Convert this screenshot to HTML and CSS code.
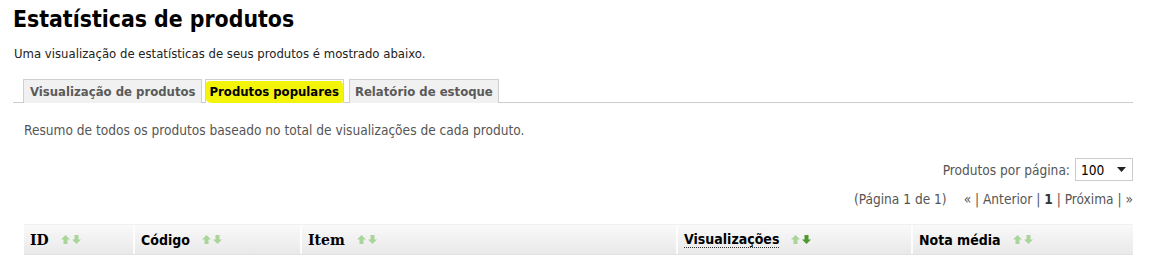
FILE: index.html
```html
<!DOCTYPE html>
<html lang="pt">
<head>
<meta charset="utf-8">
<title>Estatísticas de produtos</title>
<link rel="stylesheet" href="styles.css">
</head>
<body>
<div class="page">
  <h1 class="title">Estatísticas de produtos</h1>
  <p class="intro">Uma visualização de estatísticas de seus produtos é mostrado abaixo.</p>
  <ul class="tabs">
    <li class="tab tab-first">Visualização de produtos</li>
    <li class="tab tab-active"><span class="marker"></span><span class="tab-label">Produtos populares</span></li>
    <li class="tab tab-last">Relatório de estoque</li>
  </ul>
  <div class="panel">
    <p class="summary">Resumo de todos os produtos baseado no total de visualizações de cada produto.</p>
    <div class="perpage">
      <span class="perpage-label">Produtos por página:</span>
      <span class="select"><span class="select-value">100</span><svg class="select-caret" width="9" height="5" viewBox="0 0 9 5"><path d="M0 0H9L4.5 5Z" fill="#222"/></svg></span>
    </div>
    <div class="pager">
      <span class="pager-info">(Página 1 de 1)</span>
      <span class="pager-links">« | Anterior | <b class="pager-current">1</b> | Próxima | »</span>
    </div>
    <div class="thead">
      <div class="th col-id"><span class="th-label serif">ID</span><span class="sort"><svg width="9" height="9" viewBox="0 0 9 9"><path d="M4.5 0L9 4.5H6.5V9H2.5V4.5H0Z" fill="#a9d59a"/></svg><svg width="9" height="9" viewBox="0 0 9 9"><path d="M4.5 9L9 4.5H6.5V0H2.5V4.5H0Z" fill="#a9d59a"/></svg></span></div>
      <div class="th col-code"><span class="th-label">Código</span><span class="sort"><svg width="9" height="9" viewBox="0 0 9 9"><path d="M4.5 0L9 4.5H6.5V9H2.5V4.5H0Z" fill="#a9d59a"/></svg><svg width="9" height="9" viewBox="0 0 9 9"><path d="M4.5 9L9 4.5H6.5V0H2.5V4.5H0Z" fill="#a9d59a"/></svg></span></div>
      <div class="th col-item"><span class="th-label serif">Item</span><span class="sort"><svg width="9" height="9" viewBox="0 0 9 9"><path d="M4.5 0L9 4.5H6.5V9H2.5V4.5H0Z" fill="#a9d59a"/></svg><svg width="9" height="9" viewBox="0 0 9 9"><path d="M4.5 9L9 4.5H6.5V0H2.5V4.5H0Z" fill="#a9d59a"/></svg></span></div>
      <div class="th col-views"><span class="th-label dotted">Visualizações</span><span class="sort"><svg width="9" height="9" viewBox="0 0 9 9"><path d="M4.5 0L9 4.5H6.5V9H2.5V4.5H0Z" fill="#a9d59a"/></svg><svg width="9" height="9" viewBox="0 0 9 9"><path d="M4.5 9L9 4.5H6.5V0H2.5V4.5H0Z" fill="#4f9a2e"/></svg></span></div>
      <div class="th col-rate"><span class="th-label">Nota média</span><span class="sort"><svg width="9" height="9" viewBox="0 0 9 9"><path d="M4.5 0L9 4.5H6.5V9H2.5V4.5H0Z" fill="#a9d59a"/></svg><svg width="9" height="9" viewBox="0 0 9 9"><path d="M4.5 9L9 4.5H6.5V0H2.5V4.5H0Z" fill="#a9d59a"/></svg></span></div>
    </div>
    <div class="tbody-row"></div>
  </div>
</div>
</body>
</html>
```
FILE: styles.css
```css
html, body {
  margin: 0;
  padding: 0;
  background: #fff;
}
body {
  font-family: "DejaVu Sans", Verdana, sans-serif;
  font-stretch: condensed;
  font-size: 13px;
  color: #222;
}
.page {
  padding: 4px 19px 0 13px;
}
.title {
  margin: 0;
  font-size: 22.8px;
  line-height: 30px;
  font-weight: bold;
  color: #000;
}
.intro {
  margin: 11px 0 0 1px;
  line-height: 18px;
}
.tabs {
  list-style: none;
  margin: 16px 0 0 0;
  padding: 0 0 0 10px;
  display: flex;
  gap: 3px;
  border-bottom: 1px solid #ccc;
  height: 23px;
}
.tab {
  position: relative;
  box-sizing: border-box;
  height: 24px;
  padding: 0 6px;
  border: 1px solid #cfcfcf;
  border-bottom: none;
  background: #f1f1f1;
  font-weight: bold;
  color: #5a5a5a;
  line-height: 23px;
}
.tab-first {
  padding: 0 5px 0 6px;
}
.tab-active {
  background: #fff;
  color: #000;
  padding: 0 4px;
  margin-right: 2px;
}
.tab-last {
  padding: 0 5px;
}
.marker {
  position: absolute;
  left: 0;
  right: 0;
  top: 1px;
  bottom: 0;
  background: #f4f40a;
  border-radius: 4px 2px 3px 6px / 3px 6px 2px 4px;
}
.tab-label {
  position: relative;
}
.panel {
  padding: 0 0 0 11px;
  font-size: 13.6px;
}
.summary {
  margin: 18px 0 0 0;
  line-height: 18px;
  color: #555;
}
.perpage {
  display: flex;
  justify-content: flex-end;
  align-items: center;
  gap: 5px;
  margin-top: 19px;
  color: #555;
}
.select {
  display: flex;
  align-items: center;
  justify-content: space-between;
  box-sizing: border-box;
  width: 58px;
  height: 23px;
  padding: 0 6px 0 5px;
  border: 1px solid #ccc;
  color: #000;
  font-size: 13.6px;
}
.pager {
  display: flex;
  justify-content: flex-end;
  gap: 17px;
  margin-top: 9px;
  line-height: 18px;
  color: #555;
}
.pager-current {
  color: #333;
}
.thead {
  display: flex;
  margin-top: 16px;
  height: 29px;
  background: linear-gradient(#f9f9f9, #e9e9e9);
  border-top: 1px solid #f0f0f0;
}
.th {
  display: flex;
  align-items: center;
  gap: 12px;
  box-sizing: border-box;
  padding: 0 6px;
  border-right: 2px solid #fdfdfd;
  font-weight: bold;
  font-size: 14px;
  color: #000;
}
.th:last-child {
  border-right: none;
}
.col-id { width: 111px; }
.col-code { width: 167px; }
.col-item { width: 376px; }
.col-views { width: 235px; }
.col-rate { flex: 1; }
.serif {
  font-family: "DejaVu Serif", Georgia, serif;
  font-stretch: normal;
  font-size: 14px;
}
.dotted {
  border-bottom: 1px dotted #333;
  line-height: 15px;
}
.sort {
  display: flex;
  gap: 2px;
}
.tbody-row {
  height: 6px;
  border-top: 1px solid #e2e2e2;
  background: #fff;
}
```
